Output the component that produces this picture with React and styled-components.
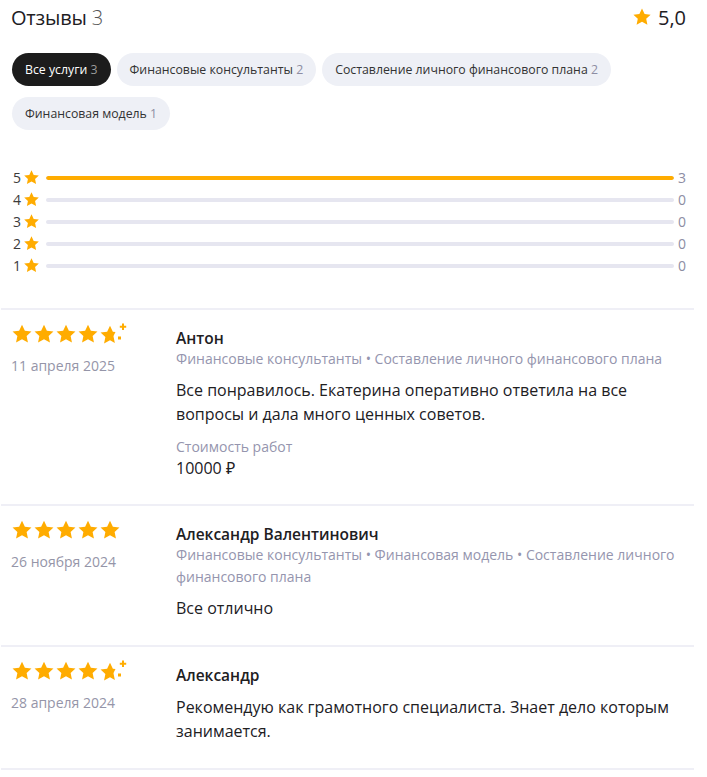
import React from 'react';
import styled, { createGlobalStyle } from 'styled-components';

const GlobalStyle = createGlobalStyle`
  body {
    margin: 0;
    background: #fff;
    font-family: "Open Sans", "Noto Sans", sans-serif;
    color: #21201f;
  }
`;

const Page = styled.div`
  width: 707px;
  box-sizing: border-box;
  padding: 3px 21px 0 11px;
`;

const Header = styled.div`
  display: flex;
  align-items: center;
  justify-content: space-between;
  height: 28px;
`;

const Title = styled.h2`
  margin: 0;
  font-size: 20px;
  font-weight: 500;
  letter-spacing: -0.2px;
`;

const TitleCount = styled.span`
  font-weight: 300;
  color: #555;
`;

const Total = styled.div`
  display: flex;
  align-items: center;
  gap: 6px;
  font-size: 20px;
`;

const Chips = styled.div`
  display: flex;
  flex-wrap: wrap;
  gap: 11px 6px;
  margin-top: 22px;
  padding-left: 1px;
`;

const Chip = styled.button`
  height: 33px;
  border: 0;
  border-radius: 17px;
  padding: 0 13px;
  font-family: inherit;
  font-size: 12.3px;
  background: ${(p) => (p.$active ? '#1c1c1c' : '#eef0f6')};
  color: ${(p) => (p.$active ? '#fff' : '#333')};
`;

const ChipCount = styled.span`
  color: ${(p) => (p.$active ? '#9a9a9a' : '#8d8da3')};
`;

const Bars = styled.div`
  display: flex;
  flex-direction: column;
  gap: 4px;
  margin-top: 38px;
`;

const BarRow = styled.div`
  display: grid;
  grid-template-columns: 10px 20px 1fr 12px;
  align-items: center;
  height: 18px;
  padding-left: 2px;
  font-size: 14px;
`;

const BarDigit = styled.span`
  color: #3b3b3b;
`;

const Track = styled.div`
  height: 4px;
  border-radius: 2px;
  margin-left: 3px;
  background: #e6e6f0;
  overflow: hidden;
`;

const Fill = styled.div`
  height: 100%;
  border-radius: 2px;
  background: #ffac00;
`;

const BarCount = styled.span`
  text-align: right;
  color: #8d8da3;
`;

const Divider = styled.hr`
  border: 0;
  height: 2px;
  background: #efeff6;
  margin: 0 -8px 0 -10px;
`;

const Reviews = styled.div`
  margin-top: 34px;
`;

const Review = styled.div`
  display: grid;
  grid-template-columns: 165px 1fr;
  padding: 13px 0 25px;
`;

const Side = styled.div`
  display: flex;
  flex-direction: column;
  gap: 11px;
`;

const Stars = styled.div`
  display: flex;
  height: 22px;
  align-items: center;
`;

const Date = styled.div`
  font-size: 14px;
  line-height: 20px;
  color: #9595a8;
`;

const Body = styled.div`
  padding-top: 5px;
`;

const Name = styled.div`
  font-size: 15.5px;
  font-weight: 600;
  line-height: 20px;
`;

const Services = styled.div`
  margin-top: 0;
  font-size: 14px;
  line-height: 22px;
  color: #9595ae;
`;

const Text = styled.p`
  margin: ${(p) => (p.$afterName ? '10px' : '8px')} 0 0;
  font-size: 16px;
  line-height: 24px;
`;

const CostLabel = styled.div`
  margin-top: 11px;
  font-size: 14px;
  line-height: 20px;
  color: #9595ae;
`;

const Cost = styled.div`
  font-size: 16px;
  line-height: 22px;
`;

const STAR = 'M10 1.5l2.6 5.5 6 .7-4.4 4.1 1.2 5.9L10 14.8l-5.4 2.9 1.2-5.9L1.4 7.7l6-.7z';

function Star({ size = 22 }) {
  return (
    <svg width={size} height={size} viewBox="0 0 20 20">
      <path d={STAR} fill="#ffac00" />
    </svg>
  );
}

function SparkStar() {
  return (
    <svg width="30" height="22" viewBox="0 0 30 22">
      <g transform="translate(0 1) scale(1.1)">
        <path
          d="M10 1.5l2.6 5.5 2.4.3-1.6 3.2-.2.8 1.2 5.9L10 14.8l-5.4 2.9 1.2-5.9L1.4 7.7l6-.7z"
          fill="#ffac00"
        />
      </g>
      <path d="M24 0.5v6.5M20.8 3.8h6.4" stroke="#ffac00" strokeWidth="2" />
      <rect x="19" y="13.5" width="3" height="3" fill="#ffac00" />
    </svg>
  );
}

const chips = [
  { label: 'Все услуги', count: 3, active: true },
  { label: 'Финансовые консультанты', count: 2 },
  { label: 'Составление личного финансового плана', count: 2 },
  { label: 'Финансовая модель', count: 1 },
];

const bars = [
  { n: 5, count: 3 },
  { n: 4, count: 0 },
  { n: 3, count: 0 },
  { n: 2, count: 0 },
  { n: 1, count: 0 },
];

const reviews = [
  {
    name: 'Антон',
    date: '11 апреля 2025',
    spark: true,
    services: 'Финансовые консультанты • Составление личного финансового плана',
    text: 'Все понравилось. Екатерина оперативно ответила на все вопросы и дала много ценных советов.',
    cost: '10000 ₽',
  },
  {
    name: 'Александр Валентинович',
    date: '26 ноября 2024',
    services:
      'Финансовые консультанты • Финансовая модель • Составление личного финансового плана',
    text: 'Все отлично',
  },
  {
    name: 'Александр',
    date: '28 апреля 2024',
    spark: true,
    text: 'Рекомендую как грамотного специалиста. Знает дело которым занимается.',
  },
];

export default function App() {
  const max = Math.max(...bars.map((b) => b.count));
  return (
    <Page>
      <GlobalStyle />
      <Header>
        <Title>
          Отзывы <TitleCount>3</TitleCount>
        </Title>
        <Total>
          <Star size={20} />
          5,0
        </Total>
      </Header>

      <Chips>
        {chips.map((c) => (
          <Chip key={c.label} $active={c.active}>
            {c.label} <ChipCount $active={c.active}>{c.count}</ChipCount>
          </Chip>
        ))}
      </Chips>

      <Bars>
        {bars.map((b) => (
          <BarRow key={b.n}>
            <BarDigit>{b.n}</BarDigit>
            <Star size={17} />
            <Track>
              <Fill style={{ width: `${max ? (b.count / max) * 100 : 0}%` }} />
            </Track>
            <BarCount>{b.count}</BarCount>
          </BarRow>
        ))}
      </Bars>

      <Reviews>
        <Divider />
        {reviews.map((r) => (
          <React.Fragment key={r.date}>
            <Review>
              <Side>
                <Stars>
                  <Star />
                  <Star />
                  <Star />
                  <Star />
                  {r.spark ? <SparkStar /> : <Star />}
                </Stars>
                <Date>{r.date}</Date>
              </Side>
              <Body>
                <Name>{r.name}</Name>
                {r.services && <Services>{r.services}</Services>}
                <Text $afterName={!r.services}>{r.text}</Text>
                {r.cost && (
                  <>
                    <CostLabel>Стоимость работ</CostLabel>
                    <Cost>{r.cost}</Cost>
                  </>
                )}
              </Body>
            </Review>
            <Divider />
          </React.Fragment>
        ))}
      </Reviews>
    </Page>
  );
}
